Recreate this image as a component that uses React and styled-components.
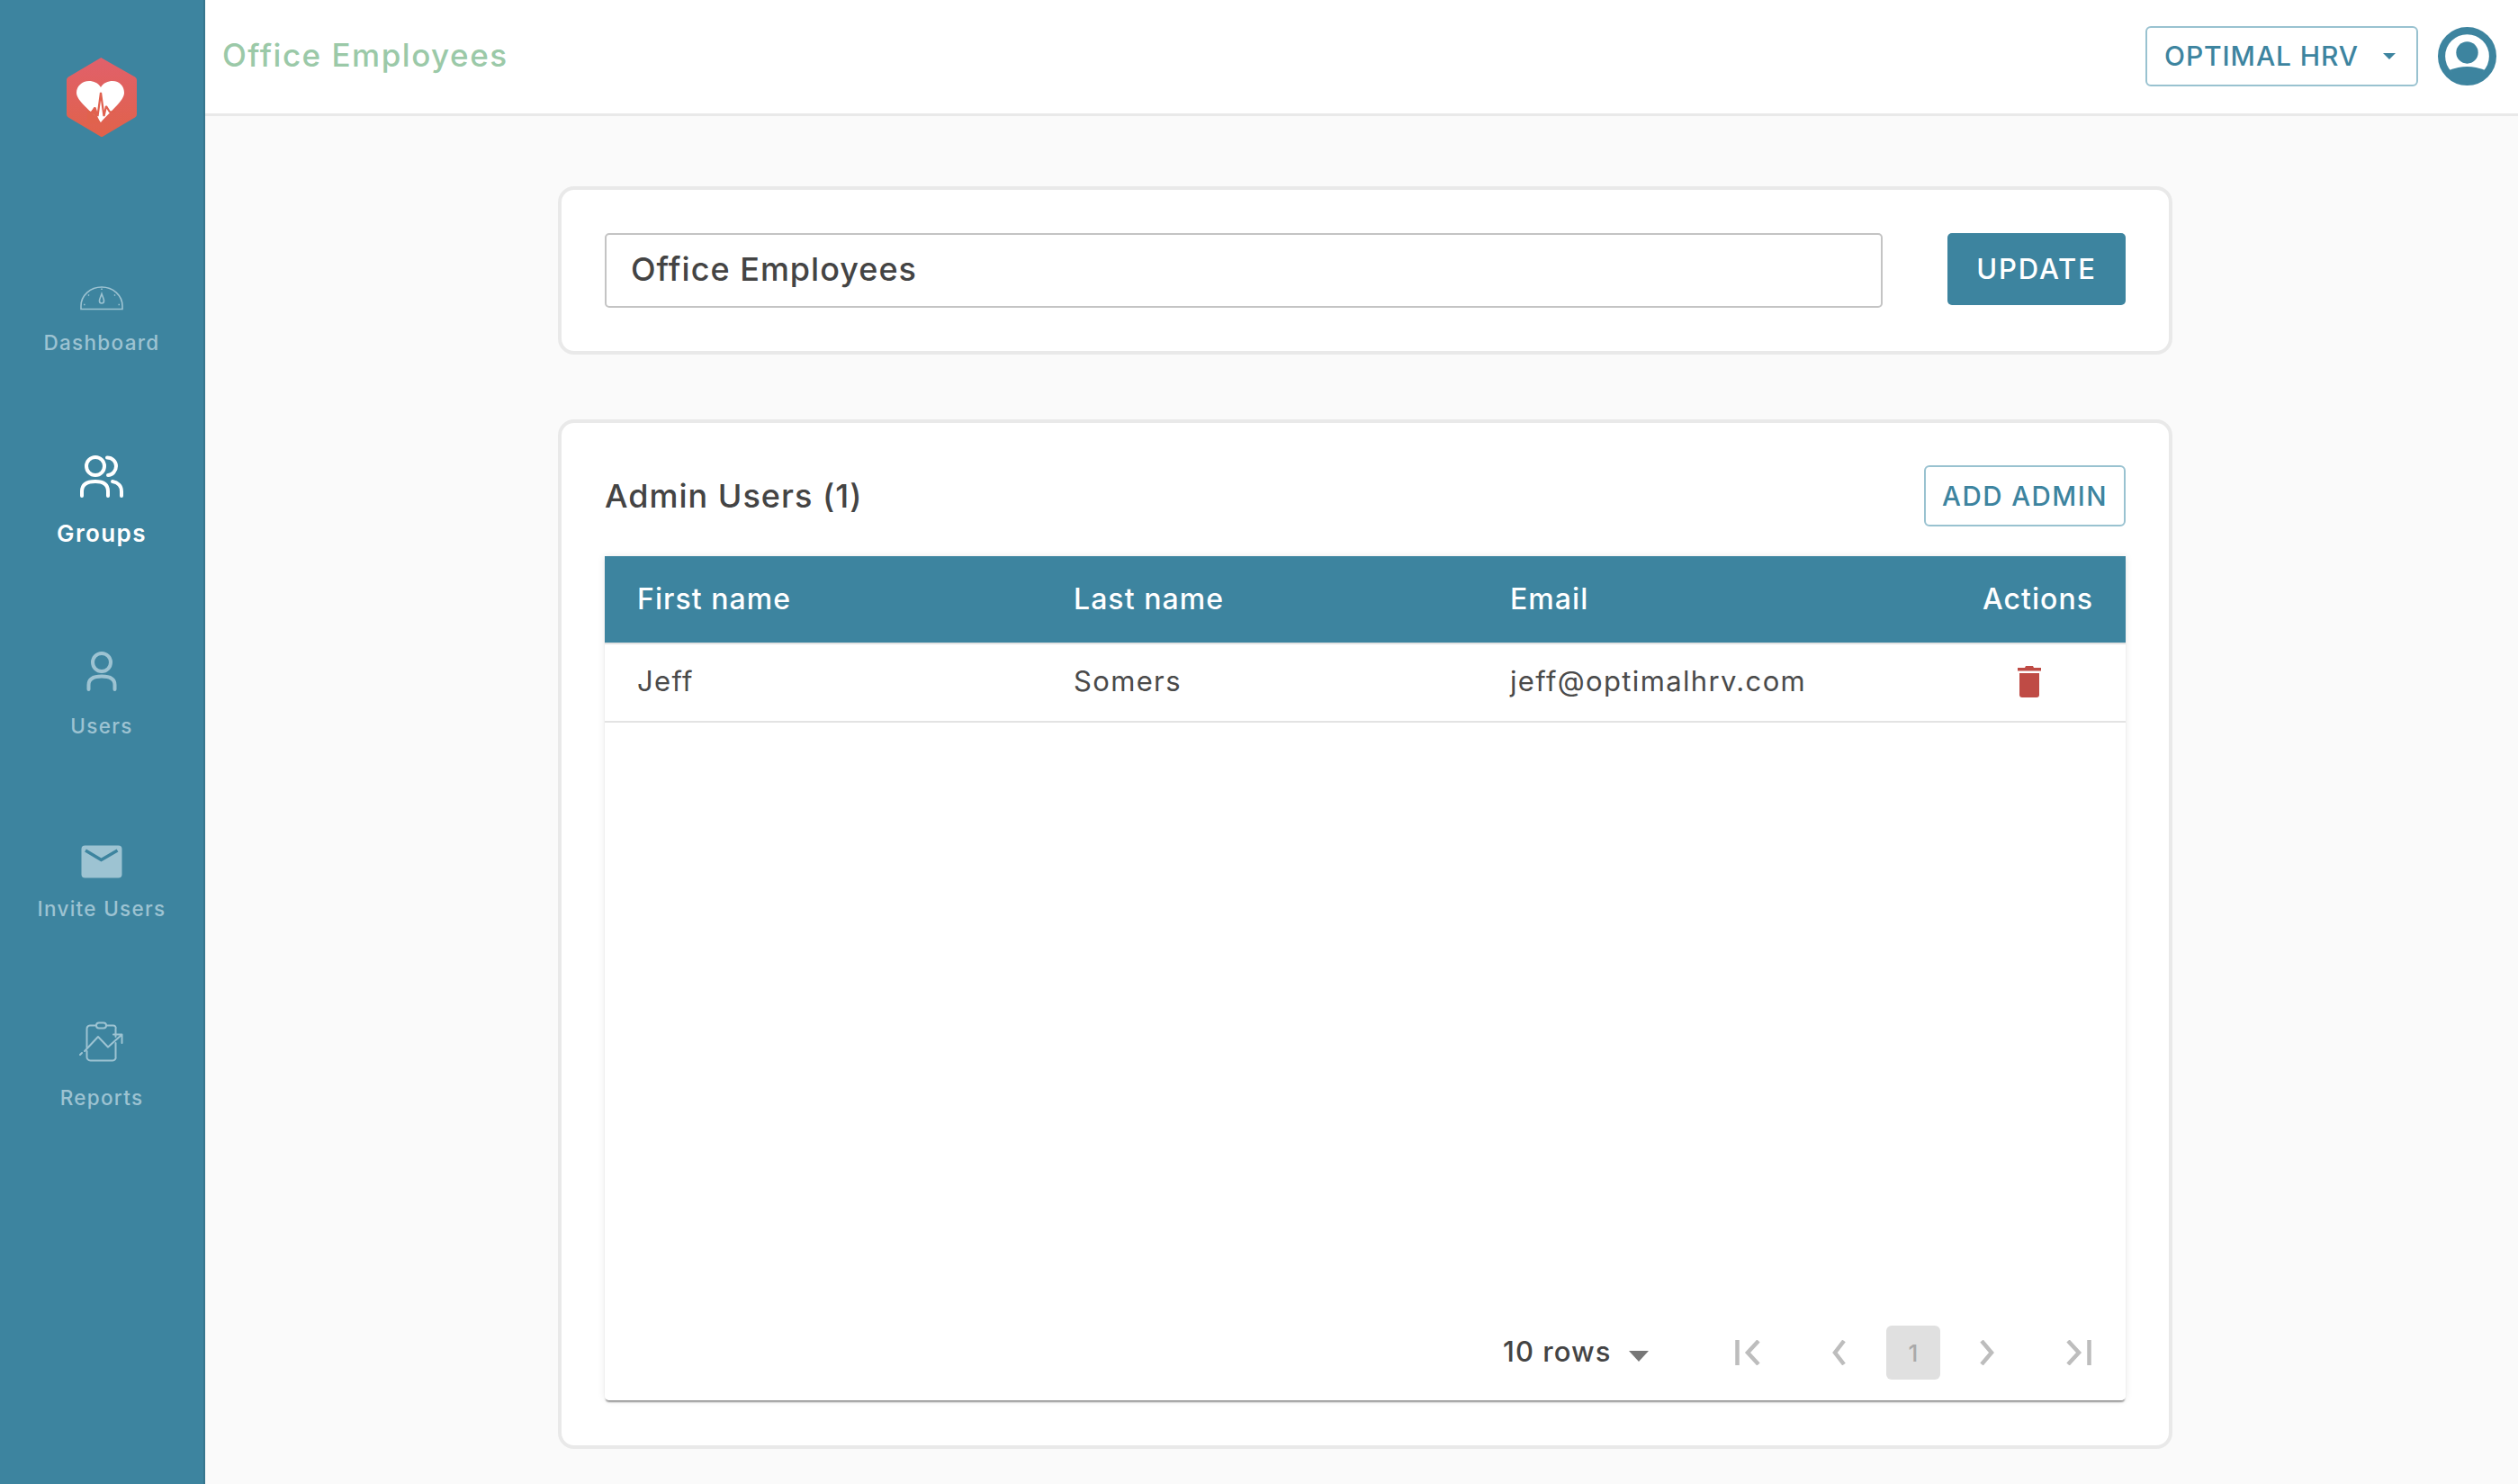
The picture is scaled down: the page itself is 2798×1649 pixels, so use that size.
import React from "react";
import styled, { createGlobalStyle } from "styled-components";

const Global = createGlobalStyle`
  html, body { margin: 0; padding: 0; height: 100%; background: #fafafa; }
  * { box-sizing: border-box; }
  body { font-family: Inter, "Liberation Sans", sans-serif; color: #444; overflow: hidden; }
`;

const Page = styled.div`display: flex; width: 2798px; height: 1649px;`;
const Sidebar = styled.aside`
  flex: 0 0 228px; height: 100%; background: #3d849f; border-right: 2px solid #37768e;
  display: flex; flex-direction: column; align-items: center;
`;
const LogoBox = styled.div`height: 318px; padding-top: 63px; display: flex; justify-content: center; width: 100%;`;
const NavItem = styled.a`
  display: flex; flex-direction: column; align-items: center; width: 100%;
  height: ${p => p.$h}px; color: ${p => p.$active ? "#fff" : "#9dc3d2"};
  font-weight: ${p => p.$active ? 600 : 500};
  font-size: ${p => p.$active ? 26 : 22.5}px; letter-spacing: ${p => p.$active ? 1.4 : 1.3}px;
`;
const NavIcon = styled.div`height: ${p => p.$h}px; display: flex; align-items: flex-start; justify-content: center; margin-bottom: ${p => p.$gap}px;`;
const NavLabel = styled.span`line-height: 28px; white-space: nowrap;`;

const Main = styled.main`flex: 1; min-width: 0; display: flex; flex-direction: column;`;
const Header = styled.header`
  height: 129px; background: #fff; border-bottom: 3px solid #e9e9e9;
  display: flex; align-items: center; padding: 0 24px 2px 19px;
`;
const Title = styled.h1`margin: 0 0 2px; font-size: 35px; font-weight: 500; color: #9bc9a8; flex: 1; letter-spacing: 1.5px;`;
const OrgSelect = styled.button`
  width: 303px; height: 67px; background: #fff; border: 2px solid #99c2d0; border-radius: 6px;
  font: 500 30px Inter, sans-serif; color: #3d849f; display: flex; align-items: center;
  padding: 0 23px 0 19px; justify-content: space-between; letter-spacing: .9px; margin-right: 22px;
`;
const Caret = styled.span`
  width: 0; height: 0; border-left: ${p => p.$s}px solid transparent; border-right: ${p => p.$s}px solid transparent;
  border-top: ${p => p.$s}px solid ${p => p.$c};
`;
const Content = styled.div`
  flex: 1; display: flex; flex-direction: column; align-items: flex-start; padding: 78px 0 0 392px; gap: 72px;
`;
const Card = styled.section`
  width: 1794px; background: #fff; border: 4px solid #e9e9e9; border-radius: 18px; padding: 48px;
`;
const TopCard = styled(Card)`height: 187px; display: flex; justify-content: space-between;`;
const NameInput = styled.div`
  width: 1420px; height: 83px; border: 2px solid #c4c4c4; border-radius: 5px; display: flex; align-items: center;
  padding: 0 27px 4px; font-size: 36px; font-weight: 500; color: #444; letter-spacing: 1px;
`;
const PrimaryButton = styled.button`
  width: 198px; height: 80px; background: #3d849f; border: 0; border-radius: 5px; color: #fff;
  font: 500 31px Inter, sans-serif; letter-spacing: 1.9px; margin-left: 2px; padding: 0 0 2px;
`;
const AdminCard = styled(Card)`height: 1144px; padding: 47px 48px 0; display: flex; flex-direction: column;`;
const CardHead = styled.div`display: flex; justify-content: space-between; align-items: center; height: 67px; margin-bottom: 34px;`;
const CardTitle = styled.h2`margin: 0; font-size: 36px; font-weight: 500; color: #444; letter-spacing: 1px;`;
const OutlineButton = styled.button`
  width: 224px; height: 68px; background: #fff; border: 2px solid #99c2d0; border-radius: 6px;
  font: 500 29.5px Inter, sans-serif; color: #3d849f; letter-spacing: 1.45px; padding: 0;
`;
const Table = styled.div`
  height: 938px; display: flex; flex-direction: column; border-radius: 0 0 5px 5px;
  box-shadow: 0 3px 2px -1px rgba(0,0,0,.4), 0 0 9px rgba(0,0,0,.09);
`;
const Row = styled.div`
  display: grid; grid-template-columns: 485px 485px 1fr 180px; align-items: center; padding: 0 36px;
`;
const HeadRow = styled(Row)`height: 96px; background: #3d849f; color: #fff; font-size: 32px; font-weight: 500; padding-bottom: 2px; letter-spacing: 1.05px;`;
const BodyRow = styled(Row)`
  height: 89px; border-top: 2px solid #e3e3e3; border-bottom: 2px solid #e3e3e3; background: #fff;
  font-size: 31px; color: #4a4a4a; padding-bottom: 4px; letter-spacing: 1.35px;
`;
const ActionsCell = styled.div`display: flex; justify-content: ${p => p.$head ? "flex-end" : "flex-start"}; padding-left: ${p => p.$head ? 0 : 95}px; margin-top: ${p => p.$head ? 0 : 2}px;`;
const Spacer = styled.div`flex: 1; background: #fff;`;
const Footer = styled.div`height: 100px; display: flex; align-items: center; padding: 0 0 6px; background: #fff; border-radius: 0 0 5px 5px;`;
const RowsSelect = styled.div`
  margin: 0 0 4px 998px; width: 258px; display: flex; align-items: center; font-size: 31px; font-weight: 500; color: #444; gap: 19px; letter-spacing: 1.05px;
`;
const DownCaret = styled.span`
  width: 0; height: 0; margin-top: 12px; border-left: 11.500px solid transparent; border-right: 11.500px solid transparent; border-top: 12px solid #777;
`;
const Pager = styled.div`display: flex; align-items: center;`;
const PagerIcon = styled.svg`display: block; margin-left: ${p => p.$ml}px;`;
const PageNum = styled.div`
  width: 60px; height: 60px; margin-left: 45px; background: #e0e0e0; border-radius: 6px;
  display: flex; align-items: center; justify-content: center; font-size: 26px; font-weight: 500; color: #aaa;
`;

const Logo = () => (
  <svg width="80" height="90" viewBox="0 0 80 90">
    <defs>
      <linearGradient id="hx" x1="0" y1="0" x2="0" y2="1">
        <stop offset="0" stopColor="#e1606b" />
        <stop offset="1" stopColor="#e0624a" />
      </linearGradient>
    </defs>
    <path d="M40 1.500 77 22.500Q79 23.500 79 26V64Q79 66.500 77 67.500L41.500 88.500Q40 89.500 38.500 88.500L3 67.500Q1 66.500 1 64V26Q1 23.500 3 22.500L38.500 1.500Q40 .7 40 1.500Z" fill="url(#hx)" />
    <path d="M39 34C42 29 47 27 52 27C60 27 65 33 65 40C65 49 50 60 39 73C28 60 12 49 12 40C12 33 18 27 26 27C31 27 36 29 39 34Z" fill="#fff" />
    <path d="M24 59 28 61 32 56 35 66 38 72 37 74H24Z" fill="#e0624d" />
    <path d="M29 62 32.500 56.500 35.500 66 39 40 42.500 66 45 55 49 61.500 55 61" fill="none" stroke="#e0614f" strokeWidth="2.200" strokeLinejoin="bevel" />
    <path d="M29 62 31 64 34 68 30.500 63.500Z" fill="#fff" />
  </svg>
);
const GaugeIcon = () => (
  <svg width="50" height="27" viewBox="0 0 50 27" fill="none" stroke="#9dc3d2" strokeWidth="1.600">
    <path d="M2 25.500H48V22A23 21 0 0 0 2 22Z" />
    <path d="M25 8.500C26.500 13 27.500 14 27.500 16.500A2.500 2.500 0 0 1 22.500 16.500C22.500 14 23.500 13 25 8.500Z" />
    <path d="M25 2.500V4M10 9.500 11 10.500M40 9.500 39 10.500M5 20.500H6.500M45 20.500H43.500" />
  </svg>
);
const GroupsIcon = () => (
  <svg width="50" height="50" viewBox="0 0 50 50" fill="none" stroke="#fff" strokeWidth="4" strokeLinecap="round">
    <circle cx="18" cy="13" r="10" />
    <path d="M31 3.500C37 3.500 41 8 41 13S37 23 32 23" />
    <path d="M3 46V41C3 33 9 30 18 30S32 33 32 41V46" />
    <path d="M37 30C43 31 47 35 47 41V46" />
  </svg>
);
const UserIcon = () => (
  <svg width="34" height="46" viewBox="0 0 34 46" fill="none" stroke="#9dc3d2" strokeWidth="4" strokeLinecap="round">
    <circle cx="17" cy="13" r="10" />
    <path d="M2.500 43V38C2.500 31 9 28.500 17 28.500S31.500 31 31.500 38V43" />
  </svg>
);
const MailIcon = () => (
  <svg width="46" height="37" viewBox="0 0 46 37">
    <rect x="0.500" y="0.500" width="45" height="36" rx="4" fill="#9dc3d2" />
    <path d="M5 6 22.500 16.500 40.500 6" fill="none" stroke="#3d849f" strokeWidth="3.500" />
  </svg>
);
const ReportIcon = () => (
  <svg width="50" height="46" viewBox="0 0 50 46" fill="none" stroke="#9dc3d2" strokeWidth="2" strokeLinecap="round" strokeLinejoin="round">
    <rect x="19" y="1.500" width="11" height="6" rx="3" />
    <path d="M19 4.500H12A4 4 0 0 0 8.500 8.500V29M30 4.500H37A3 3 0 0 1 40.500 8.500V17M8.500 33V39A4 4 0 0 0 12.500 43.500H37A3.500 3.500 0 0 0 40.500 39V24" />
    <path d="M6 33 21 17 32 28.500 47 15M38 14.500H47.500V24" />
    <path d="M1 37 3 35" />
  </svg>
);
const Avatar = () => (
  <svg width="65" height="65" viewBox="0 0 64 64">
    <circle cx="32" cy="32" r="28" fill="#fff" stroke="#3d849f" strokeWidth="8" />
    <circle cx="32" cy="28" r="12" fill="#3d849f" />
    <path d="M13 47C25 42 39 42 51 47C45 56 38 60 32 60S19 56 13 47Z" fill="#3d849f" />
  </svg>
);
const Trash = () => (
  <svg width="28" height="36" viewBox="0 0 28 36" fill="#bf4b45">
    <path d="M10 0H18L19 2H27V5.500H1V2H9Z" />
    <path d="M3 8H25V32A3 3 0 0 1 22 35H6A3 3 0 0 1 3 32Z" />
  </svg>
);
const PagerGlyph = ({ d, w, ml }) => (
  <PagerIcon $ml={ml} width={w} height="28" viewBox={`0 0 ${w} 28`} fill="none" stroke="#bdbdbd" strokeWidth="4.500">
    <path d={d} />
  </PagerIcon>
);

const navs = [
  { label: "Dashboard", Icon: GaugeIcon, h: 187, ih: 25, gap: 24 },
  { label: "Groups", Icon: GroupsIcon, h: 218, ih: 48, gap: 26, active: true },
  { label: "Users", Icon: UserIcon, h: 216, ih: 46, gap: 24 },
  { label: "Invite Users", Icon: MailIcon, h: 196, ih: 37, gap: 20 },
  { label: "Reports", Icon: ReportIcon, h: 120, ih: 46, gap: 25 },
];

export default function App() {
  return (
    <Page>
      <Global />
      <Sidebar>
        <LogoBox><Logo /></LogoBox>
        {navs.map(({ label, Icon, h, ih, gap, active }) => (
          <NavItem key={label} $h={h} $active={active}>
            <NavIcon $h={ih} $gap={gap}><Icon /></NavIcon>
            <NavLabel>{label}</NavLabel>
          </NavItem>
        ))}
      </Sidebar>
      <Main>
        <Header>
          <Title>Office Employees</Title>
          <OrgSelect>OPTIMAL HRV <Caret $s={7} $c="#3d849f" /></OrgSelect>
          <Avatar />
        </Header>
        <Content>
          <TopCard>
            <NameInput>Office Employees</NameInput>
            <PrimaryButton>UPDATE</PrimaryButton>
          </TopCard>
          <AdminCard>
            <CardHead>
              <CardTitle>Admin Users (1)</CardTitle>
              <OutlineButton>ADD ADMIN</OutlineButton>
            </CardHead>
            <Table>
              <HeadRow>
                <div>First name</div><div>Last name</div><div>Email</div>
                <ActionsCell $head>Actions</ActionsCell>
              </HeadRow>
              <BodyRow>
                <div>Jeff</div><div>Somers</div><div>jeff@optimalhrv.com</div>
                <ActionsCell><Trash /></ActionsCell>
              </BodyRow>
              <Spacer />
              <Footer>
                <RowsSelect>10 rows <DownCaret /></RowsSelect>
                <Pager>
                  <PagerGlyph w={28} ml={0} d="M2.500 0V28M26 1 14 14 26 27" />
                  <PagerGlyph w={15} ml={80} d="M13 1 3 14 13 27" />
                  <PageNum>1</PageNum>
                  <PagerGlyph w={16} ml={44} d="M2 1 13 14 2 27" />
                  <PagerGlyph w={28} ml={80} d="M2 1 14 14 2 27M25.500 0V28" />
                </Pager>
              </Footer>
            </Table>
          </AdminCard>
        </Content>
      </Main>
    </Page>
  );
}
